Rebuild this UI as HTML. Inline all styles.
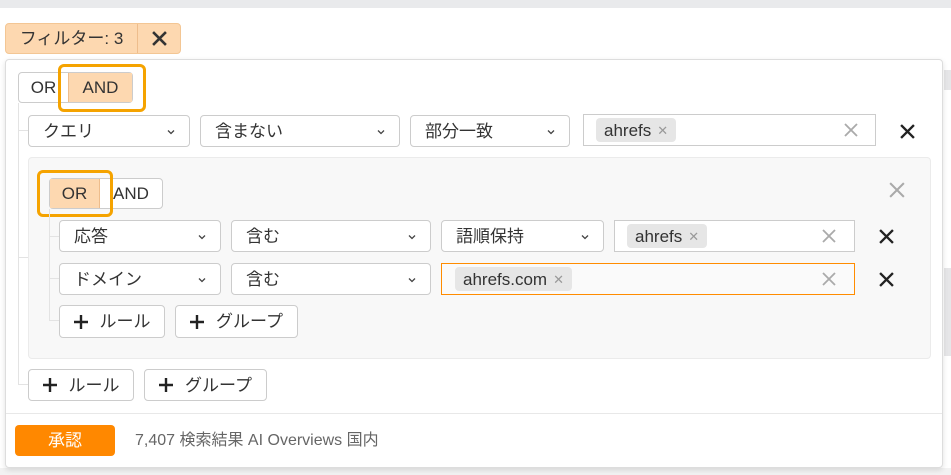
<!DOCTYPE html>
<html><head><meta charset="utf-8">
<style>
*{box-sizing:border-box;margin:0;padding:0}
body{width:951px;height:475px;overflow:hidden;background:#fff;position:relative;font-family:"Liberation Sans","Noto Sans CJK JP",sans-serif;color:#333;font-size:17px;line-height:1}
.a{position:absolute}
.c{display:flex;align-items:center;justify-content:center}
.box{position:absolute;border:1px solid #ccc;border-radius:4px;background:#fff;display:flex;align-items:center}
.sel{padding-left:14px}
.sel .chev{position:absolute;right:14px;top:12px;width:8px;height:8px}
.tag{background:#e6e6e6;border-radius:4px;height:24px;display:flex;align-items:center;padding:0 8px;font-size:17px;margin-left:10px;color:#333}
.tag span{color:#999;font-size:13px;margin-left:6px}
.x{position:absolute;width:14px;height:14px}
.btn{position:absolute;border:1px solid #ccc;border-radius:4px;background:#fff;display:flex;align-items:center;justify-content:center;font-size:17px}
.hl{position:absolute;border:3px solid #f5a300;border-radius:6px}
.ln{position:absolute;background:#e3e3e3}
.plus{width:14px;height:14px;margin-right:12px}
</style></head><body>
<div class="a" style="left:0;top:0;width:951px;height:8px;background:#e9eaec"></div>
<div class="a" style="left:944px;top:70px;width:7px;height:20px;background:#e6e6e8"></div>
<div class="a" style="left:944px;top:268px;width:7px;height:88px;background:#e6e6e8"></div>
<div class="a" style="left:0;top:468px;width:951px;height:7px;background:#f2f2f2"></div>

<div class="a" style="left:5px;top:23px;width:176px;height:31px;background:#fdd8b0;border:1px solid #f3c694;border-radius:4px"></div>
<div class="a" style="left:137px;top:24px;width:1px;height:29px;background:#eebd8c"></div>
<div class="a c" style="left:6px;top:24px;width:131px;height:29px;font-size:17px;color:#333">フィルター: 3</div>
<svg class="x" style="left:152px;top:31px;width:15px;height:15px" viewBox="0 0 14 14"><path d="M1 1L13 13M13 1L1 13" stroke="#333" stroke-width="2.4"/></svg>

<div class="a" style="left:5px;top:59px;width:938px;height:409px;background:#fff;border:1px solid #ddd;border-radius:4px;box-shadow:0 2px 6px rgba(0,0,0,.12)"></div>
<div class="a" style="left:6px;top:413px;width:936px;height:1px;background:#e8e8e8"></div>

<!-- outer OR/AND -->
<div class="btn" style="left:18px;top:72px;width:115px;height:31px"></div>
<div class="a c" style="left:19px;top:73px;width:49px;height:29px">OR</div>
<div class="a c" style="left:68px;top:73px;width:64px;height:29px;background:#fdd8b0;border-left:1px solid #eebd8c">AND</div>
<div class="hl" style="left:58px;top:64px;width:88px;height:48px"></div>

<div class="ln" style="left:18px;top:103px;width:1px;height:282px"></div>
<div class="ln" style="left:18px;top:384px;width:10px;height:1px"></div>
<div class="ln" style="left:18px;top:130px;width:10px;height:1px"></div>
<div class="ln" style="left:18px;top:257px;width:10px;height:1px"></div>

<!-- row 1 -->
<div class="box sel" style="left:28px;top:115px;width:162px;height:32px">クエリ<svg class="chev" viewBox="0 0 8 8"><path d="M1 2.5L4 5.5L7 2.5" fill="none" stroke="#444" stroke-width="1.3"/></svg></div>
<div class="box sel" style="left:200px;top:115px;width:200px;height:32px">含まない<svg class="chev" viewBox="0 0 8 8"><path d="M1 2.5L4 5.5L7 2.5" fill="none" stroke="#444" stroke-width="1.3"/></svg></div>
<div class="box sel" style="left:410px;top:115px;width:160px;height:32px">部分一致<svg class="chev" viewBox="0 0 8 8"><path d="M1 2.5L4 5.5L7 2.5" fill="none" stroke="#444" stroke-width="1.3"/></svg></div>
<div class="box" style="left:583px;top:114px;width:293px;height:32px;border-radius:0"><div class="tag" style="margin-left:12px">ahrefs<span>✕</span></div></div>
<svg class="x" style="left:844px;top:123px" viewBox="0 0 14 14"><path d="M1 1L13 13M13 1L1 13" stroke="#aaa" stroke-width="1.8"/></svg>
<svg class="x" style="left:900px;top:124px;width:15px;height:15px" viewBox="0 0 14 14"><path d="M1 1L13 13M13 1L1 13" stroke="#222" stroke-width="2.2"/></svg>

<!-- nested group -->
<div class="a" style="left:28px;top:157px;width:903px;height:202px;background:#f8f8f8;border:1px solid #ebebeb;border-radius:4px"></div>
<div class="btn" style="left:49px;top:178px;width:114px;height:31px"></div>
<div class="a c" style="left:50px;top:179px;width:50px;height:29px;background:#fdd8b0;border-right:1px solid #eebd8c">OR</div>
<div class="a c" style="left:100px;top:179px;width:62px;height:29px">AND</div>
<div class="hl" style="left:37px;top:170px;width:76px;height:47px"></div>
<svg class="x" style="left:889px;top:182px;width:16px;height:16px" viewBox="0 0 14 14"><path d="M1 1L13 13M13 1L1 13" stroke="#aaa" stroke-width="1.8"/></svg>

<div class="ln" style="left:49px;top:209px;width:1px;height:112px"></div>
<div class="ln" style="left:49px;top:236px;width:10px;height:1px"></div>
<div class="ln" style="left:49px;top:278px;width:10px;height:1px"></div>
<div class="ln" style="left:49px;top:320px;width:10px;height:1px"></div>

<!-- row 2 -->
<div class="box sel" style="left:59px;top:220px;width:162px;height:32px">応答<svg class="chev" viewBox="0 0 8 8"><path d="M1 2.5L4 5.5L7 2.5" fill="none" stroke="#444" stroke-width="1.3"/></svg></div>
<div class="box sel" style="left:231px;top:220px;width:200px;height:32px">含む<svg class="chev" viewBox="0 0 8 8"><path d="M1 2.5L4 5.5L7 2.5" fill="none" stroke="#444" stroke-width="1.3"/></svg></div>
<div class="box sel" style="left:441px;top:220px;width:163px;height:32px">語順保持<svg class="chev" viewBox="0 0 8 8"><path d="M1 2.5L4 5.5L7 2.5" fill="none" stroke="#444" stroke-width="1.3"/></svg></div>
<div class="box" style="left:614px;top:220px;width:241px;height:32px;border-radius:0"><div class="tag" style="margin-left:12px">ahrefs<span>✕</span></div></div>
<svg class="x" style="left:822px;top:229px" viewBox="0 0 14 14"><path d="M1 1L13 13M13 1L1 13" stroke="#aaa" stroke-width="1.8"/></svg>
<svg class="x" style="left:879px;top:229px;width:15px;height:15px" viewBox="0 0 14 14"><path d="M1 1L13 13M13 1L1 13" stroke="#222" stroke-width="2.2"/></svg>

<!-- row 3 -->
<div class="box sel" style="left:59px;top:263px;width:162px;height:32px">ドメイン<svg class="chev" viewBox="0 0 8 8"><path d="M1 2.5L4 5.5L7 2.5" fill="none" stroke="#444" stroke-width="1.3"/></svg></div>
<div class="box sel" style="left:231px;top:263px;width:200px;height:32px">含む<svg class="chev" viewBox="0 0 8 8"><path d="M1 2.5L4 5.5L7 2.5" fill="none" stroke="#444" stroke-width="1.3"/></svg></div>
<div class="box" style="left:441px;top:263px;width:414px;height:32px;border-radius:0;border-color:#ff8c00;background:#fafafa"><div class="tag" style="margin-left:13px">ahrefs.com<span>✕</span></div></div>
<svg class="x" style="left:822px;top:272px" viewBox="0 0 14 14"><path d="M1 1L13 13M13 1L1 13" stroke="#aaa" stroke-width="1.8"/></svg>
<svg class="x" style="left:879px;top:272px;width:15px;height:15px" viewBox="0 0 14 14"><path d="M1 1L13 13M13 1L1 13" stroke="#222" stroke-width="2.2"/></svg>

<!-- inner buttons -->
<div class="btn" style="left:59px;top:305px;width:106px;height:33px"><svg class="plus" viewBox="0 0 14 14"><path d="M7 0V14M0 7H14" stroke="#222" stroke-width="2.4"/></svg>ルール</div>
<div class="btn" style="left:175px;top:305px;width:123px;height:33px"><svg class="plus" viewBox="0 0 14 14"><path d="M7 0V14M0 7H14" stroke="#222" stroke-width="2.4"/></svg>グループ</div>

<!-- outer buttons -->
<div class="btn" style="left:28px;top:369px;width:106px;height:32px"><svg class="plus" viewBox="0 0 14 14"><path d="M7 0V14M0 7H14" stroke="#222" stroke-width="2.4"/></svg>ルール</div>
<div class="btn" style="left:144px;top:369px;width:123px;height:32px"><svg class="plus" viewBox="0 0 14 14"><path d="M7 0V14M0 7H14" stroke="#222" stroke-width="2.4"/></svg>グループ</div>

<!-- footer -->
<div class="a c" style="left:15px;top:425px;width:100px;height:31px;background:#ff8800;border-radius:4px;color:#fff;font-size:17px">承認</div>
<div class="a" style="left:135px;top:433px;font-size:16px;color:#666">7,407 検索結果 AI Overviews 国内</div>
</body></html>
